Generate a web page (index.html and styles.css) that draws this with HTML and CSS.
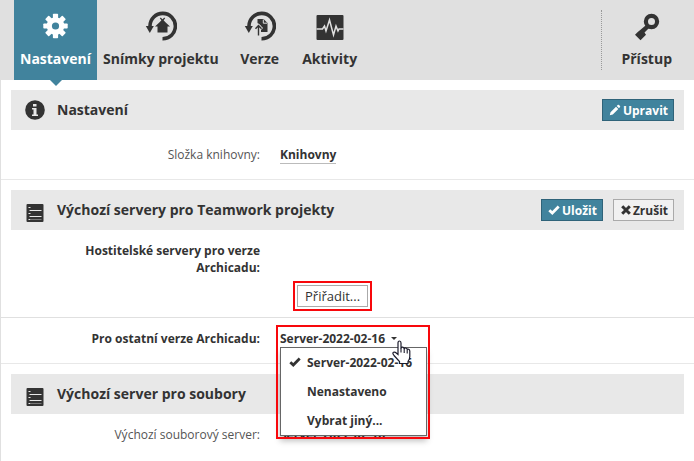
FILE: index.html
```html
<!DOCTYPE html>
<html lang="cs">
<head>
<meta charset="utf-8">
<meta name="viewport" content="width=device-width, initial-scale=1">
<title>Nastavení</title>
<link rel="stylesheet" href="styles.css">
</head>
<body>
<svg class="defs" aria-hidden="true">
  <symbol id="server" viewBox="0 0 17 18">
    <rect width="17" height="18" rx="1" fill="#333"/>
    <path d="M3 6.500h12M3 12.500h12" stroke="#e8e8e8" stroke-width="1"/>
    <path d="M2 3.500h2M2 9.500h2M2 15.500h2" stroke="#e8e8e8" stroke-width="1"/>
    <path d="M4 15.500h11" stroke="#777" stroke-width="1"/>
  </symbol>
  <symbol id="check" viewBox="0 0 12 10">
    <path d="M1.300 5.200L4.300 8L10.700 1.600" fill="none" stroke="currentColor" stroke-width="2.800"/>
  </symbol>
  <symbol id="history" viewBox="0 0 32 30">
    <path d="M5 15A12.700 12.700 0 1 1 17.500 27.800" fill="none" stroke="#333" stroke-width="3.600"/>
    <path d="M.8 15H8.800L4.800 22Z" fill="#333"/>
  </symbol>
</svg>

<nav class="topbar">
  <a class="tab active" href="#nastaveni">
    <svg width="32" height="30" viewBox="0 0 32 30"><g transform="translate(15.500 15)" fill="#fff">
      <circle r="8.800"/>
      <g id="teeth"><rect x="-2.600" y="-12.200" width="5.200" height="24.400" rx=".8"/><rect x="-12.200" y="-2.600" width="24.400" height="5.200" rx=".8"/></g>
      <use href="#teeth" transform="rotate(45)"/>
      <circle r="3.600" fill="#41839d"/></g></svg>
    <span>Nastavení</span>
  </a>
  <a class="tab" href="#snimky">
    <svg width="32" height="30" viewBox="0 0 32 30"><use href="#history"/>
      <path d="M10 15.500L17.500 8.500L25 15.500H22.500V21.500H12.500V15.500Z" fill="#333"/>
      <path d="M15.300 7L19 11M19.700 7L16 11" stroke="#333" stroke-width="1.200"/></svg>
    <span>Snímky projektu</span>
  </a>
  <a class="tab" href="#verze">
    <svg width="32" height="30" viewBox="0 0 32 30"><use href="#history"/>
      <path d="M13.500 8H19.500L23.500 12V21H17V15L13.500 12Z" fill="#333"/>
      <path d="M19.300 8.500V12.200H23" fill="none" stroke="#e0e0e0" stroke-width="1"/>
      <path d="M14.500 24.500V15M11 18L14.500 14.500L18 18" fill="none" stroke="#e0e0e0" stroke-width="3"/>
      <path d="M14.500 24.500V15M11.500 17.800L14.500 14.500L17.500 17.800" fill="none" stroke="#333" stroke-width="1.400"/></svg>
    <span>Verze</span>
  </a>
  <a class="tab" href="#aktivity">
    <svg width="32" height="30" viewBox="0 0 32 30"><rect x="2.500" y="4" width="27" height="25" rx="1" fill="#333"/>
      <path d="M2.500 18H8.500L10.500 15L12 20L15.500 9L19.500 24L22 15L24 20L25 18H29.500" fill="none" stroke="#e0e0e0" stroke-width="1.500"/></svg>
    <span>Aktivity</span>
  </a>
  <a class="tab access" href="#pristup">
    <svg width="32" height="30" viewBox="0 0 32 30"><circle cx="20.500" cy="10.500" r="5.600" fill="none" stroke="#333" stroke-width="4.200"/>
      <path d="M15.800 13.500L18.500 16.500L13.500 21.500L15 23.800L9.500 29.300L4 23.800L6.500 21.300Z" fill="#333"/></svg>
    <span>Přístup</span>
  </a>
</nav>

<main>
  <section>
    <header class="head" id="nastaveni">
      <svg class="icon" width="20" height="20" viewBox="0 0 20 20"><circle cx="10" cy="10" r="9.800" fill="#333"/><path d="M8 4h3.500v2.500H8zM7 8h4.500v6.500H13v1.500H7v-1.500h1.500v-5H7z" fill="#e8e8e8"/></svg>
      <h2>Nastavení</h2>
      <button class="btn primary" type="button"><svg width="12" height="12" viewBox="0 0 12 12"><path d="M.8 11.200L1.500 8.200L7 2.700L9.300 5L3.800 10.500ZM7.700 2L9 .8Q9.500.5 10 1L11 2Q11.500 2.500 11 3L10 4.300Z" fill="#fff"/></svg>Upravit</button>
    </header>
    <div class="row library">
      <span class="label light">Složka knihovny:</span>
      <a class="value link" href="#knihovny">Knihovny</a>
    </div>
  </section>

  <section>
    <header class="head">
      <svg class="icon server" width="17" height="18"><use href="#server"/></svg>
      <h2>Výchozí servery pro Teamwork projekty</h2>
      <button class="btn primary" type="button"><svg width="12" height="10"><use href="#check"/></svg>Uložit</button>
      <button class="btn" type="button"><svg width="10" height="10" viewBox="0 0 10 10"><path d="M1.200 1.200L8.800 8.800M8.800 1.200L1.200 8.800" stroke="#333" stroke-width="3"/></svg>Zrušit</button>
    </header>
    <div class="row hosts">
      <span class="label">Hostitelské servery pro verze Archicadu:</span>
    </div>
    <div class="row assign">
      <div class="value"><span class="mark"><button class="plain" type="button">Přiřadit...</button></span></div>
    </div>
    <div class="row other">
      <span class="label" id="other-label">Pro ostatní verze Archicadu:</span>
      <div class="value picker">
        <button class="current" type="button" aria-haspopup="menu" aria-expanded="true" aria-labelledby="other-label current-server"><span id="current-server">Server-2022-02-16</span><i class="caret"></i></button>
        <div class="menu" role="menu">
          <button type="button" role="menuitem"><svg width="12" height="10"><use href="#check"/></svg>Server-2022-02-16</button>
          <button type="button" role="menuitem">Nenastaveno</button>
          <button type="button" role="menuitem">Vybrat jiný...</button>
        </div>
        <div class="highlight"></div>
        <svg class="pointer" width="19" height="26" viewBox="0 0 19 26"><path d="M6 14.500V3Q6 1 7.500 1T9 3V8.500Q9.300 7 10.700 7.200T12.200 9Q12.500 7.800 13.800 8T15.200 9.800Q15.500 8.800 16.600 9.200T17.800 11V16.500Q17.800 19.500 16 21.500V23.500H7.500V21.500L2 15.500Q0 13 1.500 12.300T4 12.800Z" fill="#fff" stroke="#1c1c2c" stroke-width="1.200"/><path d="M9 8V12.500M12.200 9V13M15.200 10V13.500" stroke="#1c1c2c" stroke-width="1.100"/></svg>
      </div>
    </div>
  </section>

  <section>
    <header class="head">
      <svg class="icon server" width="17" height="18"><use href="#server"/></svg>
      <h2>Výchozí server pro soubory</h2>
    </header>
    <div class="row files">
      <span class="label light">Výchozí souborový server:</span>
      <a class="value" href="#server">Server-2022-02-16</a>
    </div>
  </section>
</main>
</body>
</html>
```
FILE: styles.css
```css
* { box-sizing: border-box; }
body {
  margin: 0;
  background: #fff;
  color: #333;
  font: 700 12px/17px "Open Sans", "Noto Sans", sans-serif;
}
a { color: inherit; text-decoration: none; }
button { font: inherit; color: inherit; margin: 0; }
svg { display: block; flex: none; }
.defs { position: absolute; width: 0; height: 0; }

.topbar {
  display: flex;
  height: 80px;
  padding: 0 0 0 14px;
  background: #e0e0e0;
}
.tab {
  position: relative;
  display: flex;
  flex-direction: column;
  align-items: center;
  gap: 8px;
  min-width: 70px;
  padding: 11px 6px 0;
  font-size: 14px;
  line-height: 20px;
  white-space: nowrap;
}
.tab.active { background: #41839d; color: #fff; }
.tab.active::after {
  content: "";
  position: absolute;
  top: 100%;
  left: 50%;
  margin-left: -6px;
  border: 6px solid transparent;
  border-top-color: #41839d;
  border-bottom: 0;
}
.tab.access {
  margin: 10px 0 10px auto;
  padding: 1px 22px 0 19px;
  border-left: 1px dotted #999;
}

main { border-left: 1px solid #e0e0e0; min-height: calc(100vh - 80px); }
section { padding-top: 10px; }
section + section { border-top: 1px solid #e8e8e8; }
.head {
  display: flex;
  align-items: center;
  height: 40px;
  margin: 0 10px;
  padding: 0 10px 0 13px;
  background: #e8e8e8;
}
.icon { width: 22px; }
.icon.server { margin-top: 6px; }
h2 {
  flex: 1;
  margin: 0 0 0 11px;
  font-size: 14px;
  line-height: 20px;
}
.btn {
  display: flex;
  align-items: center;
  gap: 2px;
  height: 22px;
  margin-left: 10px;
  padding: 0 5px 0 7px;
  border: 1px solid #aaa;
  background: #f1f1f1;
}
.btn.primary { padding-left: 6px; border-color: #2f6379; background: #41839d; color: #fff; }

.row { display: grid; grid-template-columns: 259px 1fr; column-gap: 20px; align-items: start; }
.label { padding-left: 60px; text-align: right; }
.light { font-weight: 400; color: #555; }
.value { grid-column: 2; justify-self: start; }
.library { padding: 16px 0 15px; }
.link { border-bottom: 1px solid #bbb; }
.hosts { padding: 12px 0 5px; }
.assign { border-bottom: 1px solid #e0e0e0; padding-bottom: 6px; }
.mark { display: block; margin-left: 13px; padding: 2px; border: 2px solid #f8080c; }
.plain {
  display: block;
  height: 22px;
  padding: 0 7px;
  border: 1px solid #aaa;
  background: #fff;
  font-size: 13px;
  font-weight: 400;
}
.other { padding: 12px 0 16px; }
.files { padding: 12px 0; }

.picker { position: relative; }
.current { display: flex; align-items: center; gap: 6px; padding: 0; border: 0; background: none; }
.caret { border: 3px solid transparent; border-top-color: #333; border-bottom: 0; }
.menu {
  position: absolute;
  top: 17px;
  left: 0;
  z-index: 2;
  width: 147px;
  border: 1px solid #666;
  background: #fff;
  box-shadow: 0 5px 6px rgba(0, 0, 0, .25);
}
.menu button {
  position: relative;
  display: block;
  width: 100%;
  height: 29px;
  padding: 0 0 0 26px;
  border: 0;
  background: none;
  text-align: left;
  white-space: nowrap;
}
.menu svg { position: absolute; left: 8px; top: 9px; }
.highlight {
  position: absolute;
  top: -5px;
  left: -4px;
  z-index: 3;
  width: 154px;
  height: 114px;
  border: 2px solid #f8080c;
  pointer-events: none;
}
.pointer { position: absolute; top: 10px; left: 112px; z-index: 4; }
```
